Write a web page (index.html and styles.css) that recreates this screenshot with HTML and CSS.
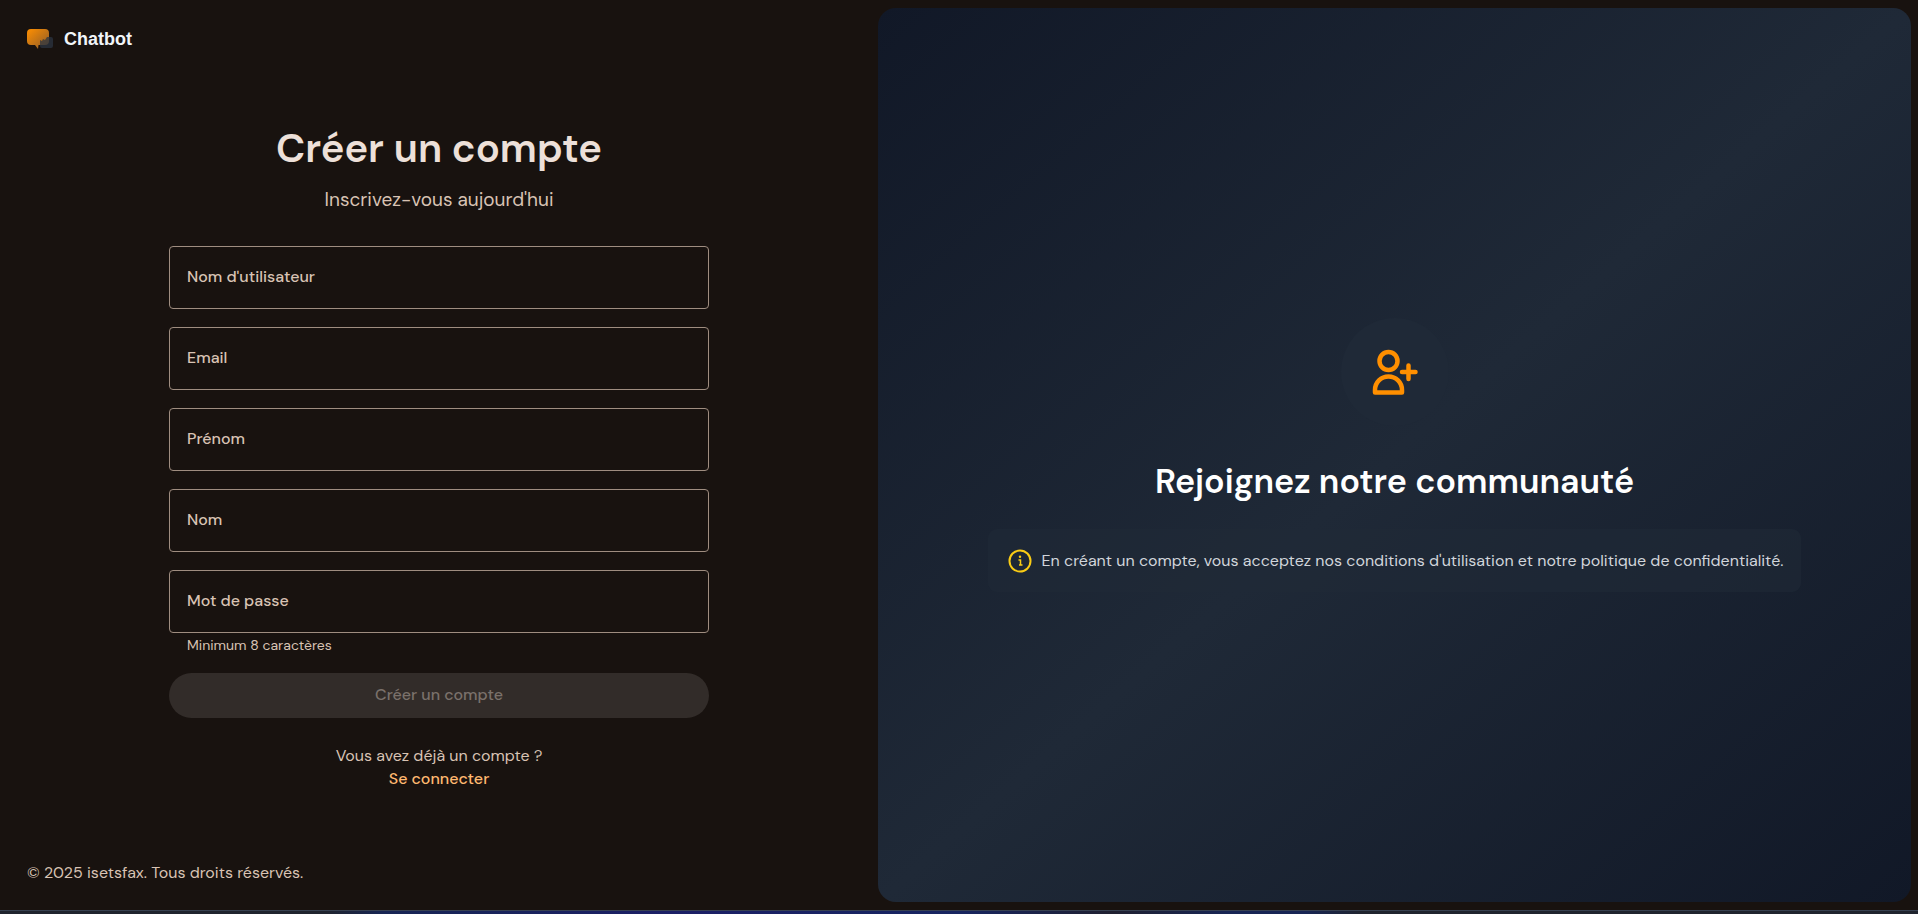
FILE: index.html
```html
<!DOCTYPE html>
<html lang="fr">
<head>
<meta charset="utf-8">
<title>Chatbot – Créer un compte</title>
<link rel="stylesheet" href="styles.css">
</head>
<body>
<div class="page">
  <main class="auth">
    <header class="brand">
      <svg class="brand-logo" viewBox="0 0 28 22" aria-hidden="true">
        <defs>
          <linearGradient id="bubble" x1="0" y1="0" x2="1" y2="1">
            <stop offset="0" stop-color="#ff8f00"/>
            <stop offset="1" stop-color="#8a5a2b"/>
          </linearGradient>
        </defs>
        <path fill="url(#bubble)" d="M4 1h14a4 4 0 0 1 4 4v8a4 4 0 0 1-4 4h-6.500l-.5 4-3-4H4a4 4 0 0 1-4-4V5a4 4 0 0 1 4-4z"/>
        <path fill="#2b3442" fill-opacity=".75" d="M13 12l2 1 1-2 2 1 2-3h4a2 2 0 0 1 2 2v7a2 2 0 0 1-2 2h-9a2 2 0 0 1-2-2v-5z"/>
      </svg>
      <span class="brand-name">Chatbot</span>
    </header>
    <section class="signup">
      <h1 class="title">Créer un compte</h1>
      <p class="subtitle">Inscrivez-vous aujourd'hui</p>
      <form class="form">
        <div class="field"><input class="input" id="username" type="text" placeholder=" "><label class="label" for="username">Nom d'utilisateur</label></div>
        <div class="field"><input class="input" id="email" type="email" placeholder=" "><label class="label" for="email">Email</label></div>
        <div class="field"><input class="input" id="firstname" type="text" placeholder=" "><label class="label" for="firstname">Prénom</label></div>
        <div class="field"><input class="input" id="lastname" type="text" placeholder=" "><label class="label" for="lastname">Nom</label></div>
        <div class="field"><input class="input" id="password" type="password" placeholder=" " aria-describedby="hint"><label class="label" for="password">Mot de passe</label></div>
        <p class="hint" id="hint">Minimum 8 caractères</p>
        <button class="submit" type="submit" disabled>Créer un compte</button>
      </form>
      <p class="login">Vous avez déjà un compte ?<a class="login-link" href="#">Se connecter</a></p>
    </section>
    <footer class="copyright">© 2025 isetsfax. Tous droits réservés.</footer>
  </main>
  <aside class="promo">
    <div class="promo-icon">
      <svg class="user-plus" viewBox="0 0 48 48" fill="none" stroke="#ff8f00" stroke-width="4.500" stroke-linecap="round" stroke-linejoin="round" aria-hidden="true">
        <circle cx="17.500" cy="13" r="9"/>
        <path d="M4 44.500v-2.500a13.500 13.500 0 0 1 27 0v2.500zM31 24h13.500M37.500 17.500v13.500"/>
      </svg>
    </div>
    <h2 class="promo-title">Rejoignez notre communauté</h2>
    <div class="notice">
      <svg class="info" viewBox="0 0 24 24" fill="none" stroke="#facc15" stroke-width="2" aria-hidden="true">
        <circle cx="12" cy="12" r="10.500"/>
        <path d="M10.500 11h2v5.500M11 16h3.500" stroke-width="1.500"/>
        <circle cx="12" cy="7.800" r="1.200" fill="#facc15" stroke="none"/>
      </svg>
      <p class="notice-text">En créant un compte, vous acceptez nos conditions d'utilisation et notre politique de confidentialité.</p>
    </div>
  </aside>
</div>
<div class="strip"></div>
</body>
</html>
```
FILE: styles.css
```css
* { box-sizing: border-box; }
body {
  margin: 0;
  min-height: 100vh;
  display: flex;
  flex-direction: column;
  background: #18120f;
  color: #d8c3b4;
  font: 16px/24px "DM Sans", Inter, sans-serif;
}
h1, h2, p { margin: 0; }
.page {
  flex: 1;
  display: grid;
  grid-template-columns: 17fr 20fr;
  padding: 8px 7px 8px 0;
}
.auth {
  display: flex;
  flex-direction: column;
  padding: 17px 27px;
}
.brand { display: flex; align-items: center; gap: 9px; height: 28px; }
.brand-logo { width: 28px; height: 22px; }
.brand-name {
  font: bold 18px/28px "Liberation Sans", Arial, sans-serif;
  color: #f1f5f9;
}
.signup {
  flex: 1;
  display: flex;
  flex-direction: column;
  justify-content: center;
  width: 100%;
  max-width: 540px;
  margin: 0 auto;
  padding-bottom: 3px;
  text-align: center;
}
.title { font-size: 40px; line-height: 52px; font-weight: 600; color: #ede0d9; }
.subtitle { margin-top: 12px; font-size: 19px; line-height: 28px; }
.form { display: flex; flex-direction: column; margin-top: 32px; }
.field { position: relative; height: 63px; }
.field + .field { margin-top: 18px; }
.input {
  width: 100%;
  height: 100%;
  padding: 0 18px;
  border: 1px solid #9f8d80;
  border-radius: 4px;
  background: transparent;
  color: #ede0d9;
  font: inherit;
}
.label {
  position: absolute;
  top: 19px;
  left: 18px;
  font-weight: 500;
  pointer-events: none;
}
.input:focus + .label, .input:not(:placeholder-shown) + .label { top: -12px; background: #18120f; }
.hint { padding: 2px 18px 0; text-align: left; font-size: 14px; line-height: 20px; }
.submit {
  height: 45px;
  margin-top: 18px;
  border: 0;
  border-radius: 23px;
  background: #322c29;
  color: #7a716b;
  font: 500 16px/24px "DM Sans", Inter, sans-serif;
}
.login { display: flex; flex-direction: column; align-items: center; margin-top: 26px; line-height: 23px; }
.login-link { color: #ffb870; font-weight: 500; text-decoration: none; }
.promo {
  display: flex;
  flex-direction: column;
  align-items: center;
  justify-content: center;
  border-radius: 18px;
  background: linear-gradient(to bottom right, #111827, #1f2937 50%, #111827);
}
.promo-icon {
  display: grid;
  place-items: center;
  width: 108px;
  height: 108px;
  border-radius: 50%;
  background: #1f2937;
}
.user-plus { width: 48px; height: 48px; }
.promo-title { margin-top: 36px; font-size: 34px; line-height: 40px; font-weight: 600; color: #fff; }
.notice {
  display: flex;
  align-items: center;
  gap: 10px;
  margin-top: 27px;
  padding: 19px 18px 19px 20px;
  border-radius: 9px;
  background: rgba(31, 41, 55, .6);
  color: #d1d5db;
}
.info { flex: none; width: 24px; height: 24px; }
.notice-text { line-height: 25px; }
.strip {
  height: 4px;
  border-top: 1px solid #374151;
  background: linear-gradient(90deg, #1f242e 0 17%, #172554 20%, #1b1f66 35%, #172560 50%, #1f2030 58%, #172554 64%, #172554 68%, #1f242e 71%);
}
```
